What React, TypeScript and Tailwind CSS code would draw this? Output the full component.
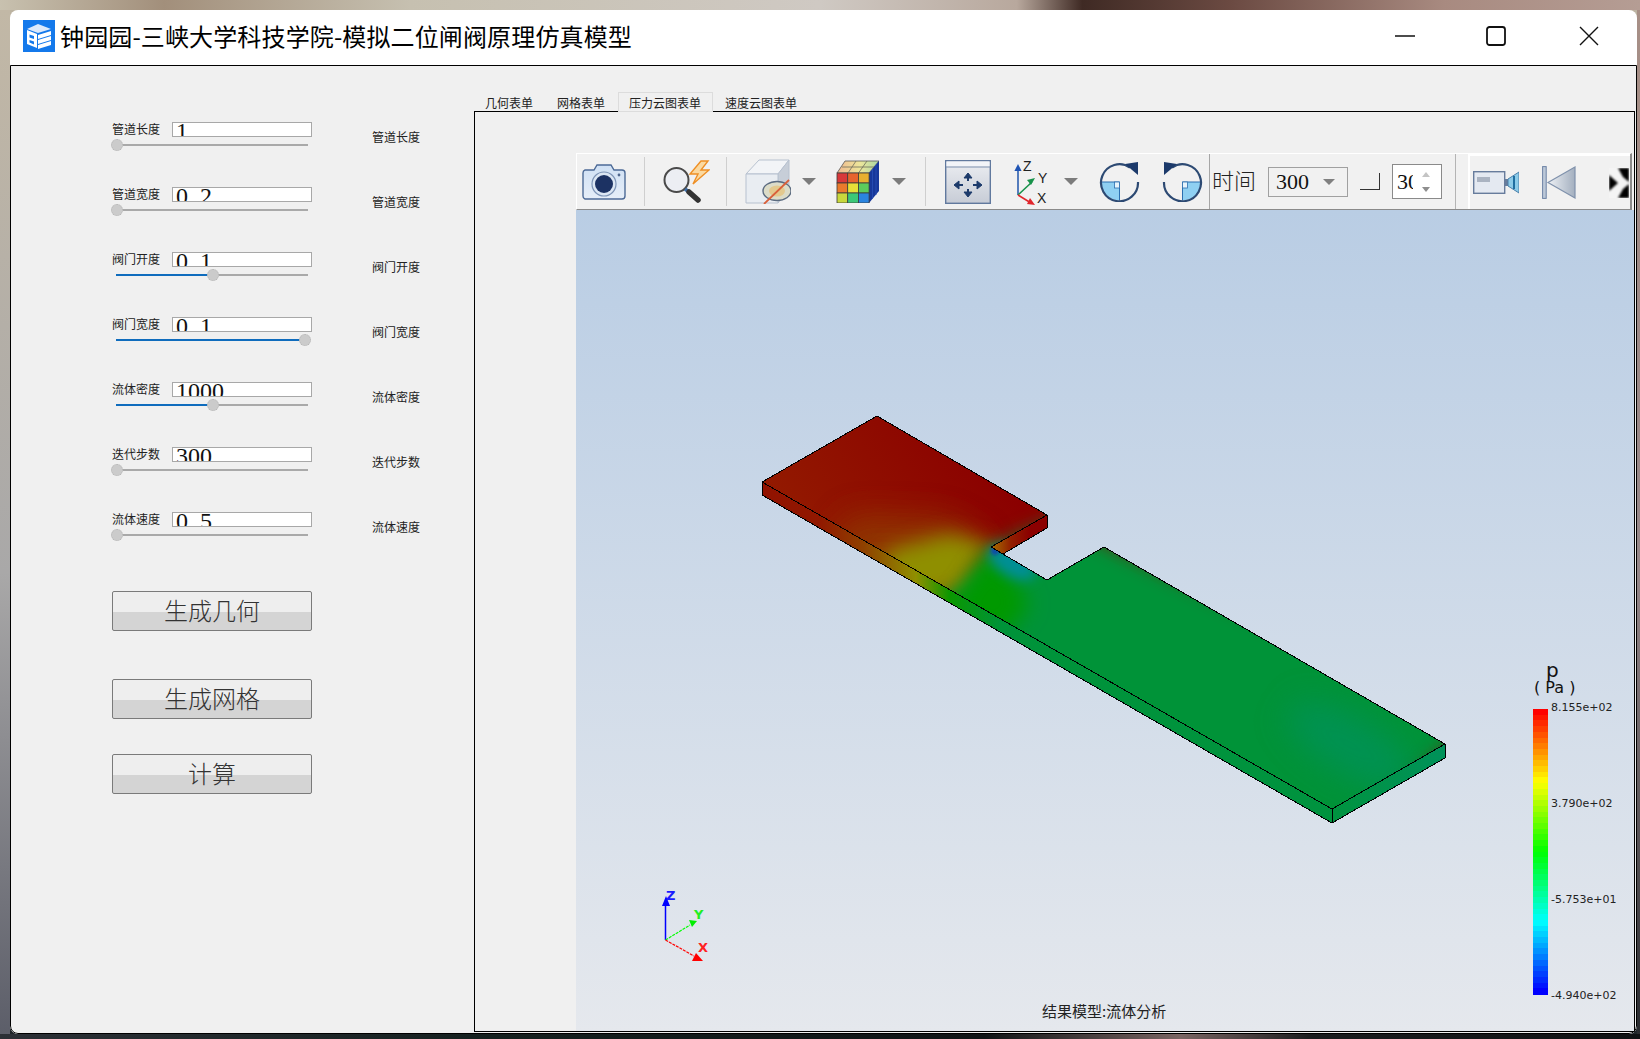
import { ReactNode } from "react"

const params = [
  { label: "管道长度", value: "1", pos: 0 },
  { label: "管道宽度", value: "0.2", pos: 0 },
  { label: "阀门开度", value: "0.1", pos: 0.511 },
  { label: "阀门宽度", value: "0.1", pos: 1 },
  { label: "流体密度", value: "1000", pos: 0.511 },
  { label: "迭代步数", value: "300", pos: 0 },
  { label: "流体速度", value: "0.5", pos: 0 },
]

const topFace = "762,482 877,416 1047,515 991,547 1047,580 1104,547 1445,744 1332,809"

// red -> yellow -> green -> cyan -> blue, in bands like the solver's legend
function bandColor(t: number) {
  const stops = [
    [255, 0, 0],
    [255, 255, 0],
    [0, 255, 0],
    [0, 255, 255],
    [0, 0, 255],
  ]
  const p = t * 4
  const i = Math.min(Math.floor(p), 3)
  const f = p - i
  const c = stops[i].map((v, k) => Math.round(v + (stops[i + 1][k] - v) * f))
  return `rgb(${c[0]},${c[1]},${c[2]})`
}

function Slider({ pos }: { pos: number }) {
  return (
    <div className="relative mt-[7px] ml-[4px] h-[2px] w-[192px] bg-[#a9a9a9]">
      <div className="h-full bg-[#0f6cbd]" style={{ width: pos * 189 }} />
      <div
        className="absolute -top-[5px] h-3 w-3 rounded-full border border-dotted border-[#b5b5b5] bg-[#cbcbcb]"
        style={{ left: pos * 188 - 5 }}
      />
    </div>
  )
}

function ParamRow({ label, value, pos }: { label: string; value: string; pos: number }) {
  return (
    <div className="flex h-[65px] text-xs text-[#222]">
      <div className="w-[200px]">
        <div className="flex h-[15px] items-center">
          <span className="-mt-[2px] w-[60px]">{label}</span>
          <div className="h-[15px] w-[140px] overflow-hidden border border-[#a8a8a8] bg-white pl-[3px] font-['Liberation_Serif',serif] text-[24px] leading-[24px] text-[#111]">
            <div className="-mt-[4px] flex">
              {value.split("").map((ch, i) => (
                <span key={i} className="w-3 shrink-0 text-center">
                  {ch}
                </span>
              ))}
            </div>
          </div>
        </div>
        <Slider pos={pos} />
      </div>
      <span className="mt-[7px] ml-[60px] leading-[15px]">{label}</span>
    </div>
  )
}

function BigButton({ children, className }: { children: ReactNode; className?: string }) {
  return (
    <button
      className={`flex h-10 w-[200px] items-center justify-center rounded-[2px] border border-[#7a7a7a] bg-[linear-gradient(#eeeeee_52%,#d4d4d4_52%)] pb-[3px] text-2xl font-light text-[#333] ${className}`}
    >
      {children}
    </button>
  )
}

function Tab({ children, active }: { children: ReactNode; active?: boolean }) {
  return (
    <div
      className={
        active
          ? "relative z-10 -mb-px flex h-5 items-center border border-[#dcdcdc] bg-[#f0f0f0] pt-[1px] pr-[11px] pl-[10px]"
          : "flex h-[19px] items-center px-[11px] pt-[2px] last:-ml-px"
      }
    >
      {children}
    </div>
  )
}

function Sep({ className }: { className?: string }) {
  return <div className={`h-[49px] w-px shrink-0 bg-[#cfcfcf] ${className}`} />
}

function Tri({ className }: { className?: string }) {
  return (
    <svg width="14" height="7" viewBox="0 0 14 7" className={`shrink-0 ${className}`}>
      <path d="M0 0h14L7 7z" fill="#7c7c7c" />
    </svg>
  )
}

function CameraIcon() {
  return (
    <svg width="44" height="36" viewBox="0 0 44 36" className="ml-[5px] shrink-0">
      <defs>
        <linearGradient id="camBody" x1="0" y1="0" x2="0" y2="1">
          <stop offset="0" stopColor="#cfe0f4" />
          <stop offset="1" stopColor="#e6eef8" />
        </linearGradient>
      </defs>
      <path
        d="M3 6h9l3-5h14l3 5h8a3 3 0 0 1 3 3v23a3 3 0 0 1-3 3H3a3 3 0 0 1-2-3V9a3 3 0 0 1 2-3z"
        fill="url(#camBody)"
        stroke="#4c6a96"
        strokeWidth="1.4"
      />
      <circle cx="22" cy="20" r="12" fill="#dbe6f3" stroke="#7d94b6" strokeWidth="1.2" />
      <circle cx="22" cy="20" r="9" fill="#1c3263" />
      <circle cx="37" cy="11" r="1.4" fill="#51688f" />
    </svg>
  )
}

function SearchBoltIcon() {
  return (
    <svg width="47" height="43" viewBox="0 0 47 43" className="ml-[18px] shrink-0">
      <path d="M38 1 L27 14 L35 14 L30 24 L46 10 L38 10 L45 1 Z" fill="#fbd9a0" stroke="#ee8f25" strokeWidth="1.4" />
      <circle cx="13.5" cy="20" r="12" fill="#eceef3" stroke="#4a4a4a" strokeWidth="2" />
      <path d="M22 29 L26 32" stroke="#3f6ea8" strokeWidth="3.5" />
      <path d="M26 32 L35 40" stroke="#333" strokeWidth="5.5" strokeLinecap="round" />
    </svg>
  )
}

function HiddenCubeIcon() {
  return (
    <svg width="46" height="45" viewBox="0 0 46 45" className="ml-[18px] shrink-0">
      <path d="M1 15 L14 1 H44 L33 15 Z" fill="#f2f4f7" stroke="#b7c1cf" />
      <path d="M33 15 L44 1 V30 L33 44 Z" fill="#c7ced8" stroke="#b7c1cf" />
      <path d="M1 15 H33 V44 H1 Z" fill="#e9edf2" stroke="#b7c1cf" />
      <ellipse cx="32" cy="32" rx="14" ry="9.5" fill="#dcdcc8" stroke="#5b6b80" strokeWidth="1.4" />
      <ellipse cx="32" cy="32" rx="8" ry="5.5" fill="#e3c98e" />
      <path d="M19 45 L44 21" stroke="#d9603a" strokeWidth="1.8" />
    </svg>
  )
}

function ColorCubeIcon() {
  const cols = [
    ["#d8383a", "#e8642e", "#e8b030"],
    ["#ea7a2c", "#e8e038", "#5ccc5c"],
    ["#c8d83c", "#3cc878", "#2a84e0"],
  ]
  return (
    <svg width="43" height="43" viewBox="0 0 43 43" className="ml-[20px] shrink-0">
      <defs>
        <linearGradient id="cubeTop" x1="0" y1="0" x2="1" y2="0">
          <stop offset="0" stopColor="#f0b890" />
          <stop offset="0.55" stopColor="#ece69a" />
          <stop offset="1" stopColor="#a8d8a4" />
        </linearGradient>
      </defs>
      <path d="M1 13 L9 1 H43 L33 13 Z" fill="url(#cubeTop)" stroke="#555" strokeWidth="0.8" />
      <path d="M33 13 L43 1 V31 L33 43 Z" fill="#17389a" />
      {cols.map((row, r) =>
        row.map((c, i) => <rect key={`${r}-${i}`} x={1 + i * 10.7} y={13 + r * 10} width="10.7" height="10" fill={c} stroke="#3a3a3a" strokeWidth="0.8" />)
      )}
      <path d="M12 13 L20 1 M22.5 13 L31 1 M6 7 H38" stroke="#6d6d5b" strokeWidth="0.8" />
      <path d="M36.5 9V39M40 5V35" stroke="#2a50b8" strokeWidth="0.8" />
    </svg>
  )
}

function MoveIcon() {
  return (
    <svg width="46" height="44" viewBox="0 0 46 44" className="ml-[19px] shrink-0">
      <defs>
        <linearGradient id="moveFill" x1="0" y1="0" x2="0" y2="1">
          <stop offset="0" stopColor="#eceef2" />
          <stop offset="1" stopColor="#c7ccd6" />
        </linearGradient>
      </defs>
      <rect x="0.7" y="0.7" width="44.6" height="42.6" fill="url(#moveFill)" stroke="#61799e" strokeWidth="1.4" />
      <rect x="1.5" y="1.5" width="43" height="5" fill="#f2f4f8" />
      <path d="M1 7H45" stroke="#7d90ae" strokeWidth="1.2" />
      <g fill="#1c3a6b" stroke="#1c3a6b">
        <path d="M23 13l-4 5h8z" />
        <path d="M23 37l-4-5h8z" />
        <path d="M9 25l5-4v8z" />
        <path d="M37 25l-5-4v8z" />
        <path d="M23 18v3M23 29v3M14 25h4M28 25h4" strokeWidth="2" />
      </g>
    </svg>
  )
}

function AxesIcon() {
  return (
    <svg width="36" height="46" viewBox="0 0 36 46" className="ml-[22px] shrink-0">
      <path d="M5 36V10" stroke="#2d5fb0" strokeWidth="1.6" />
      <path d="M5 5l-3.6 7h7.2z" fill="#1f54b4" />
      <path d="M5 36L19 23" stroke="#17924a" strokeWidth="1.6" />
      <path d="M22 19l-8 2 4 5z" fill="#17924a" />
      <path d="M5 36L18 44" stroke="#e0262c" strokeWidth="1.6" />
      <path d="M22 46l-8-1 3-6z" fill="#e0262c" />
      <text x="10" y="12" fontFamily="'Liberation Sans', sans-serif" fontSize="14" fill="#222">Z</text>
      <text x="25" y="24" fontFamily="'Liberation Sans', sans-serif" fontSize="14" fill="#222">Y</text>
      <text x="24" y="44" fontFamily="'Liberation Sans', sans-serif" fontSize="14" fill="#222">X</text>
    </svg>
  )
}

function RotateIcon({ flip, className }: { flip?: boolean; className?: string }) {
  return (
    <svg width="41" height="41" viewBox="0 0 41 41" className={`shrink-0 ${flip ? "-scale-x-100" : ""} ${className}`}>
      <path d="M20.5 21H2 a18.5 18.5 0 0 0 18.5 18.5z" fill="#8fd0f2" />
      <path d="M2 21H20.5V39.5" fill="none" stroke="#2b6fb0" strokeWidth="1" />
      <rect x="15.5" y="21" width="5" height="6" fill="#e6f4fc" stroke="#2b6fb0" strokeWidth="0.8" />
      <path d="M31 6.5A18.5 18.5 0 1 0 39 21" fill="none" stroke="#2d4a73" strokeWidth="2.2" />
      <path d="M26 3 L39 1 V14 Z" fill="#1c3a6b" />
    </svg>
  )
}

function VideoIcon() {
  return (
    <svg width="46" height="23" viewBox="0 0 46 23" className="ml-[3px] shrink-0">
      <rect x="0.7" y="0.7" width="31" height="21.6" fill="#e4e9f1" stroke="#677c9c" strokeWidth="1.4" />
      <rect x="4" y="6" width="13" height="5" fill="#aab3c1" />
      <path d="M32 8h4v7h-4z" fill="#677c9c" />
      <path d="M35 8 L46 1 V22 L35 15 Z" fill="#8ccbe8" stroke="#4b7fa9" />
      <path d="M41 5V18" stroke="#1f6ea0" strokeWidth="2" />
    </svg>
  )
}

function BackIcon() {
  return (
    <svg width="34" height="33" viewBox="0 0 34 33" className="ml-[23px] shrink-0">
      <defs>
        <linearGradient id="backFill" x1="0" y1="0" x2="1" y2="0">
          <stop offset="0" stopColor="#eef1f5" />
          <stop offset="1" stopColor="#a3afbf" />
        </linearGradient>
      </defs>
      <rect x="0.6" y="0.6" width="3.6" height="31.8" fill="#bcc8d8" stroke="#6d83a5" />
      <path d="M6 16.5 L33 1 V32 Z" fill="url(#backFill)" stroke="#8092ac" strokeWidth="1.2" />
    </svg>
  )
}

function JaggedIcon() {
  return (
    <svg width="20" height="30" viewBox="0 0 20 30" className="ml-[33px] shrink-0">
      <defs>
        <filter id="soft" x="-20%" y="-20%" width="140%" height="140%">
          <feGaussianBlur stdDeviation="1" />
        </filter>
      </defs>
      <rect width="20" height="30" fill="#f4f4f4" />
      <g fill="#000" filter="url(#soft)">
        <path d="M0 7 L9 15 L0 23Z" />
        <path d="M9 0 H20 V14 L14 9Z" />
        <path d="M9 30 H20 V16 L14 21Z" />
      </g>
    </svg>
  )
}

function Toolbar() {
  return (
    <div className="mr-[2px] flex h-[57px] shrink-0 items-center overflow-hidden border-t border-r-2 border-b border-l border-t-white border-r-[#8a8a8a] border-b-[#8a8a8a] border-l-white bg-[#f1f1f1]">
      <CameraIcon />
      <Sep className="ml-[18px]" />
      <SearchBoltIcon />
      <Sep className="ml-[16px]" />
      <HiddenCubeIcon />
      <Tri className="ml-[11px]" />
      <ColorCubeIcon />
      <Tri className="ml-[13px]" />
      <Sep className="ml-[19px]" />
      <MoveIcon />
      <AxesIcon />
      <Tri className="ml-[15px]" />
      <RotateIcon className="ml-[21px]" />
      <RotateIcon flip className="ml-[22px]" />
      <div className="ml-[6px] h-full w-px shrink-0 bg-[#a6a6a6]" />
      <span className="ml-[2px] w-[45px] shrink-0 font-['Liberation_Serif','Noto_Sans_CJK_SC',serif] text-[22px] leading-none font-light text-[#222]">
        时间
      </span>
      <div className="ml-[11px] flex h-[30px] w-[80px] shrink-0 items-center border border-[#a0a0a0] pr-[12px] pl-[7px] font-['Liberation_Serif',serif] text-[22px] text-[#111]">
        <span className="flex-1">300</span>
        <svg width="12" height="6" viewBox="0 0 12 6">
          <path d="M0 0h12L6 6z" fill="#808080" />
        </svg>
      </div>
      <div className="ml-[12px] h-[17px] w-[20px] shrink-0 border-r border-b border-r-[#333] border-b-[#333]" />
      <div className="ml-[12px] flex h-[35px] w-[50px] shrink-0 items-center border border-[#8a8a8a] bg-white pl-[4px] font-['Liberation_Serif',serif] text-[22px] text-[#111]">
        <span className="w-[11px] shrink-0">3</span>
        <span className="w-[5px] shrink-0 overflow-hidden">0</span>
        <svg width="10" height="20" viewBox="0 0 10 20" className="ml-[8px] shrink-0">
          <path d="M1 5 L5 0 L9 5z" fill="#c4c4c4" />
          <path d="M1 15h8l-4 5z" fill="#8e8e8e" />
        </svg>
      </div>
      <div className="ml-[13px] h-full w-px shrink-0 bg-[#b4b4b4]" />
      <div className="ml-[12px] flex h-full flex-1 items-center border-t-2 border-l-2 border-t-white border-l-white">
        <VideoIcon />
        <BackIcon />
        <JaggedIcon />
      </div>
    </div>
  )
}

function ResultModel() {
  return (
    <svg viewBox="576 210 1057 821" width="1057" height="821" className="absolute inset-0">
      <defs>
        <clipPath id="topClip">
          <polygon points={topFace} />
        </clipPath>
        <filter id="b16" x="-60%" y="-60%" width="220%" height="220%">
          <feGaussianBlur stdDeviation="16" />
        </filter>
        <filter id="b10" x="-60%" y="-60%" width="220%" height="220%">
          <feGaussianBlur stdDeviation="10" />
        </filter>
        <filter id="b6" x="-60%" y="-60%" width="220%" height="220%">
          <feGaussianBlur stdDeviation="6" />
        </filter>
        <filter id="b1" x="-100%" y="-100%" width="300%" height="300%">
          <feGaussianBlur stdDeviation="1.5" />
        </filter>
        <linearGradient id="redBase" gradientUnits="userSpaceOnUse" x1="820" y1="580" x2="1000" y2="470">
          <stop offset="0" stopColor="#931a00" />
          <stop offset="1" stopColor="#8b0000" />
        </linearGradient>
        <linearGradient id="frontFace" gradientUnits="userSpaceOnUse" x1="762" y1="0" x2="1332" y2="0">
          <stop offset="0" stopColor="#911200" />
          <stop offset="0.1" stopColor="#911800" />
          <stop offset="0.18" stopColor="#8f4200" />
          <stop offset="0.27" stopColor="#8f8f00" />
          <stop offset="0.33" stopColor="#0a9700" />
          <stop offset="0.42" stopColor="#009339" />
          <stop offset="1" stopColor="#00933f" />
        </linearGradient>
        <linearGradient id="rightFace" gradientUnits="userSpaceOnUse" x1="1332" y1="0" x2="1445" y2="0">
          <stop offset="0" stopColor="#00933f" />
          <stop offset="1" stopColor="#00925a" />
        </linearGradient>
        <linearGradient id="notchWall" gradientUnits="userSpaceOnUse" x1="992" y1="0" x2="1030" y2="0">
          <stop offset="0" stopColor="#a56c00" />
          <stop offset="0.5" stopColor="#921e00" />
          <stop offset="1" stopColor="#8b0000" />
        </linearGradient>
      </defs>

      <polygon points="762,482 1332,809 1332,823 762,495" fill="url(#frontFace)" />
      <polygon points="1332,809 1445,744 1445,758 1332,823" fill="url(#rightFace)" />
      <polygon points="991,547 1047,515 1047,528 1003,554" fill="url(#notchWall)" />

      <g clipPath="url(#topClip)">
        <rect x="740" y="400" width="740" height="430" fill="url(#redBase)" />
        <polygon points="985,552 1060,520 1480,720 1340,850 925,610 950,575" fill="#009339" filter="url(#b10)" />
        <polygon points="991,545 945,518 850,515 825,560 885,600" fill="#8f3a00" opacity="0.85" filter="url(#b16)" />
        <polygon points="990,544 950,534 890,550 875,572 925,600 960,590" fill="#8f8f00" filter="url(#b10)" />
        <polygon points="990,549 962,590 945,610 1000,640 1030,605 1010,572" fill="#009900" filter="url(#b10)" />
        <ellipse cx="1012" cy="563" rx="26" ry="13" transform="rotate(30 1012 563)" fill="#008f95" filter="url(#b6)" />
        <circle cx="995" cy="551" r="4" fill="#0a4fa5" filter="url(#b1)" />
        <ellipse cx="1350" cy="745" rx="70" ry="28" transform="rotate(30 1350 745)" fill="#00925c" opacity="0.75" filter="url(#b16)" />
      </g>

      <g fill="none" stroke="#000" strokeWidth="1" shapeRendering="crispEdges">
        <polygon points={topFace} />
        <polyline points="762,482 762,495 1332,823 1445,758 1445,744" />
        <line x1="1332" y1="809" x2="1332" y2="823" />
        <polyline points="1047,515 1047,528 1003,554" />
      </g>

      <g fontFamily="'DejaVu Sans', sans-serif" fontSize="13" fontWeight="bold">
        <path d="M665.5 940V902" stroke="#0000ff" strokeWidth="1.5" />
        <path d="M666 896l-4 10h8z" fill="#0000ff" />
        <text x="666" y="900" fill="#1a1aff">Z</text>
        <path d="M665.5 940L690 925" stroke="#00ff00" strokeWidth="1.2" strokeDasharray="3 1" />
        <path d="M697 921l-8-1 3 7z" fill="#00ee00" />
        <text x="694" y="919" fill="#22ee22">Y</text>
        <path d="M665.5 940L694 956" stroke="#ff0000" strokeWidth="1.2" strokeDasharray="3 1" />
        <path d="M703 961l-11 0 4-8z" fill="#ff0000" />
        <text x="698" y="952" fill="#ff2222">X</text>
      </g>

      {Array.from({ length: 50 }, (_, i) => (
        <rect key={i} x="1533" y={709 + (i * 285) / 50} width="15" height={285 / 50 + 0.5} fill={bandColor(i / 49)} shapeRendering="crispEdges" />
      ))}
    </svg>
  )
}

function Legend() {
  const ticks = [
    { text: "8.155e+02", cls: "top-[491px]" },
    { text: "3.790e+02", cls: "top-[587px]" },
    { text: "-5.753e+01", cls: "top-[683px]" },
    { text: "-4.940e+02", cls: "top-[779px]" },
  ]
  return (
    <>
      <div className="absolute top-[451px] left-[970px] font-['DejaVu_Sans',sans-serif] text-[20px] leading-[18px] text-[#111]">p</div>
      <div className="absolute top-[470px] left-[958px] font-['DejaVu_Sans',sans-serif] text-[16px] leading-[16px] whitespace-pre text-[#111]">
        {"( Pa )"}
      </div>
      {ticks.map((t) => (
        <div key={t.text} className={`absolute left-[975px] font-['DejaVu_Sans',sans-serif] text-[11px] leading-[14px] text-[#222] ${t.cls}`}>
          {t.text}
        </div>
      ))}
    </>
  )
}

export default function App() {
  return (
    <div className="flex h-[1039px] w-[1640px] flex-col overflow-hidden bg-[linear-gradient(#bdb4a2,#6a6a72_85%,#1c2226)] font-['Noto_Sans_CJK_SC','Liberation_Sans',sans-serif]">
      <div className="h-[10px] shrink-0 bg-[linear-gradient(90deg,#c8c1af,#a28f7b_10%,#c6c0b0_25%,#cfc9c3_50%,#b8a89d_62%,#3f2a24_66%,#6b4a42_75%,#a88a80_88%,#b59d94)]" />
      <div className="flex min-h-0 flex-1">
        <div className="w-[10px] shrink-0 bg-[linear-gradient(#c2b8a6,#a9a8a8_55%,#5c5e69)]" />
        <div className="flex w-[1627px] shrink-0 flex-col overflow-hidden rounded-[8px] bg-white">
          <div className="flex h-[55px] shrink-0 items-center pb-[4px] pl-[13px]">
            <svg width="32" height="32" viewBox="0 0 32 32" className="shrink-0">
              <rect width="32" height="32" fill="#1479eb" />
              <path d="M4 9 L15 4 L28 9 L15 13z" fill="#dce9fb" />
              <path d="M4 10 L14 14 V28 L4 24z M6.5 14.5 V17.5 L11 19 V16z M6.5 20 V22.5 L11 24.5 V21.5z" fill="#fff" fillRule="evenodd" />
              <path d="M15 15 L28 11 V15 L15 19z M15 20 L28 16 V20 L15 24z M15 25 L28 21 V25 L15 29z" fill="#fff" />
            </svg>
            <span className="ml-[5px] text-2xl leading-none tracking-[0.13px] whitespace-nowrap text-black">
              钟园园-三峡大学科技学院-模拟二位闸阀原理仿真模型
            </span>
            <div className="ml-auto flex h-full items-center pr-[3px]">
              <div className="flex w-[91px] justify-center">
                <svg width="20" height="2" viewBox="0 0 20 2">
                  <path d="M0 1h20" stroke="#111" strokeWidth="1.6" />
                </svg>
              </div>
              <div className="flex w-[91px] justify-center">
                <svg width="20" height="20" viewBox="0 0 20 20">
                  <rect x="1" y="1" width="18" height="18" rx="2.5" fill="none" stroke="#111" strokeWidth="1.8" />
                </svg>
              </div>
              <div className="ml-[2px] flex w-[91px] justify-center">
                <svg width="20" height="20" viewBox="0 0 20 20">
                  <path d="M1 1L19 19M19 1L1 19" stroke="#111" strokeWidth="1.4" />
                </svg>
              </div>
            </div>
          </div>

          <div className="flex min-h-0 flex-1 rounded-b-[8px] border border-black bg-[#f0f0f0] pr-px pb-px">
            <div className="w-[463px] shrink-0 pt-[56px] pl-[101px]">
              {params.map((p) => (
                <ParamRow key={p.label} {...p} />
              ))}
              <BigButton className="mt-[14px]">生成几何</BigButton>
              <BigButton className="mt-[48px]">生成网格</BigButton>
              <BigButton className="mt-[35px]">计算</BigButton>
            </div>

            <div className="flex min-w-0 flex-1 flex-col pt-[26px] text-xs text-[#222]">
              <div className="flex h-[19px] shrink-0 gap-[2px] whitespace-nowrap">
                <Tab>几何表单</Tab>
                <Tab>网格表单</Tab>
                <Tab active>压力云图表单</Tab>
                <Tab>速度云图表单</Tab>
              </div>
              <div className="flex min-h-0 flex-1 flex-col border border-black pt-[41px] pl-[101px]">
                <Toolbar />
                <div className="relative min-h-0 flex-1 overflow-hidden bg-linear-to-b from-[#b9cde4] to-[#e5e8ed]">
                  <ResultModel />
                  <Legend />
                  <div className="absolute bottom-[12px] left-[466px] text-[15px] leading-[16px] text-[#222]">结果模型:流体分析</div>
                </div>
              </div>
            </div>
          </div>
        </div>
        <div className="flex-1 bg-[linear-gradient(#a78f86,#96888a_55%,#2a2c30)]" />
      </div>
      <div className="h-[5px] shrink-0 bg-[linear-gradient(90deg,#2c3036,#15201f_30%,#101416_60%,#7a6563_72%,#1a1c1e_80%,#101214)]" />
    </div>
  )
}
